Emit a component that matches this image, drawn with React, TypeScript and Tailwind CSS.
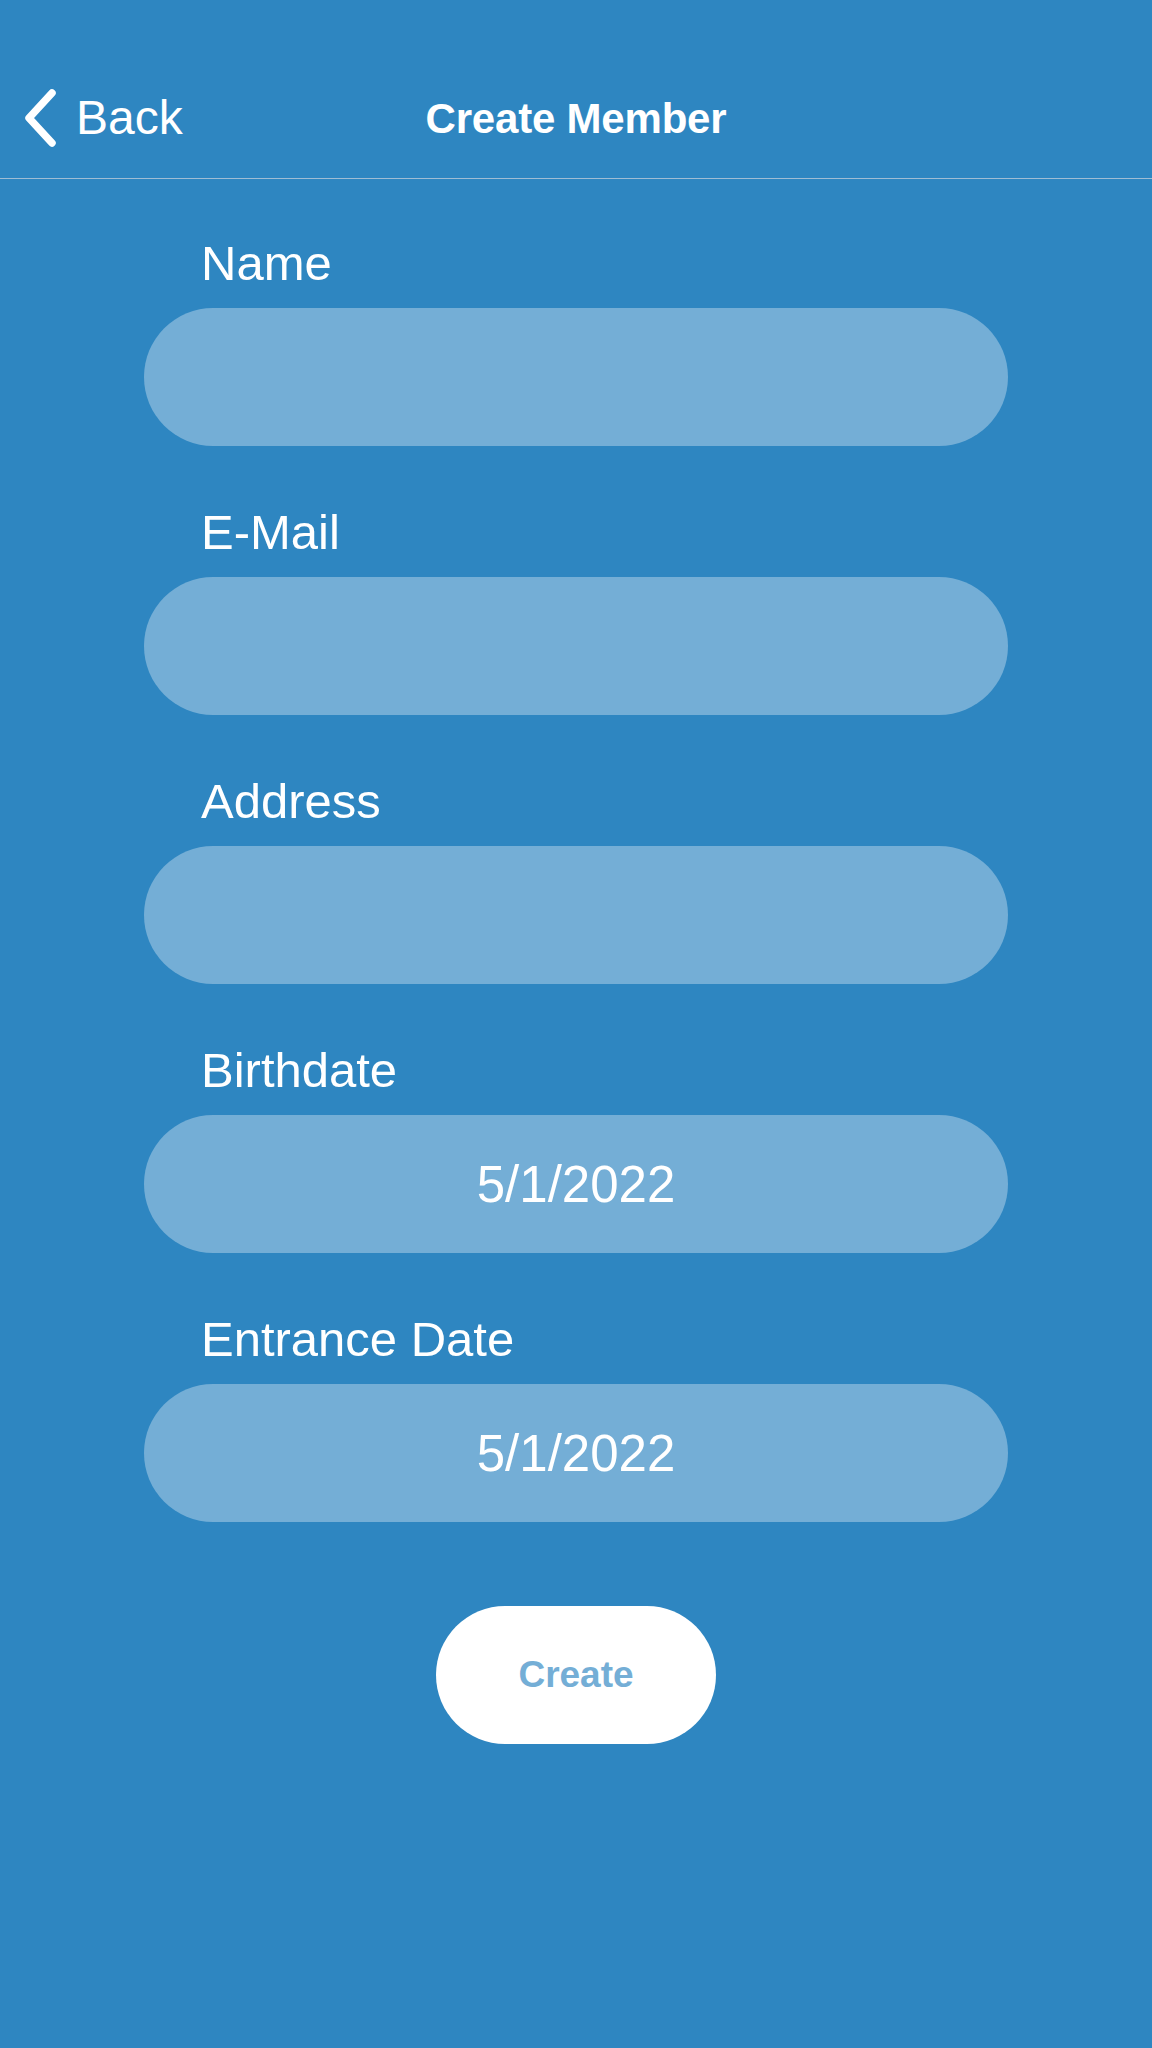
const fields = [
  { label: "Name", value: "" },
  { label: "E-Mail", value: "" },
  { label: "Address", value: "" },
  { label: "Birthdate", value: "5/1/2022" },
  { label: "Entrance Date", value: "5/1/2022" },
];

const CreateMember = () => {
  return (
    <div className="min-h-[2048px] w-full bg-[#2e86c1] text-white font-['Liberation_Sans',Arial,sans-serif]">
      {/* Nav bar */}
      <header className="h-[179px] border-b border-[#9fbdd4] pt-[82px]">
        <div className="grid h-[74px] grid-cols-[1fr_auto_1fr] items-center">
          <button className="flex items-center gap-[18px] pl-[22px] text-[48px] leading-none text-white">
            <svg width="36" height="60" viewBox="0 0 36 60" fill="none" className="-mt-[3px]">
              <polyline
                points="30,5 7,30 30,55"
                stroke="white"
                strokeWidth="7.5"
                strokeLinecap="round"
                strokeLinejoin="round"
              />
            </svg>
            <span className="-mt-[2px]">Back</span>
          </button>
          <h1 className="text-[42px] font-bold leading-none tracking-[-0.2px]">Create Member</h1>
          <div />
        </div>
      </header>

      {/* Form */}
      <main className="mx-auto flex w-[864px] flex-col gap-[58px] pt-[56px]">
        {fields.map((field, index) => (
          <div key={index} className="flex flex-col gap-[17px]">
            <label className="pl-[57px] text-[49px] leading-[56px]">{field.label}</label>
            <div className="flex h-[138px] items-center justify-center rounded-full bg-[#74aed6] text-[51px] leading-none">
              {field.value}
            </div>
          </div>
        ))}

        <div className="flex justify-center pt-[26px]">
          <button className="flex h-[138px] w-[280px] items-center justify-center rounded-full bg-white text-[37px] font-bold text-[#74aed6]">
            Create
          </button>
        </div>
      </main>
    </div>
  );
};

export default function App() {
  return <CreateMember />;
}
